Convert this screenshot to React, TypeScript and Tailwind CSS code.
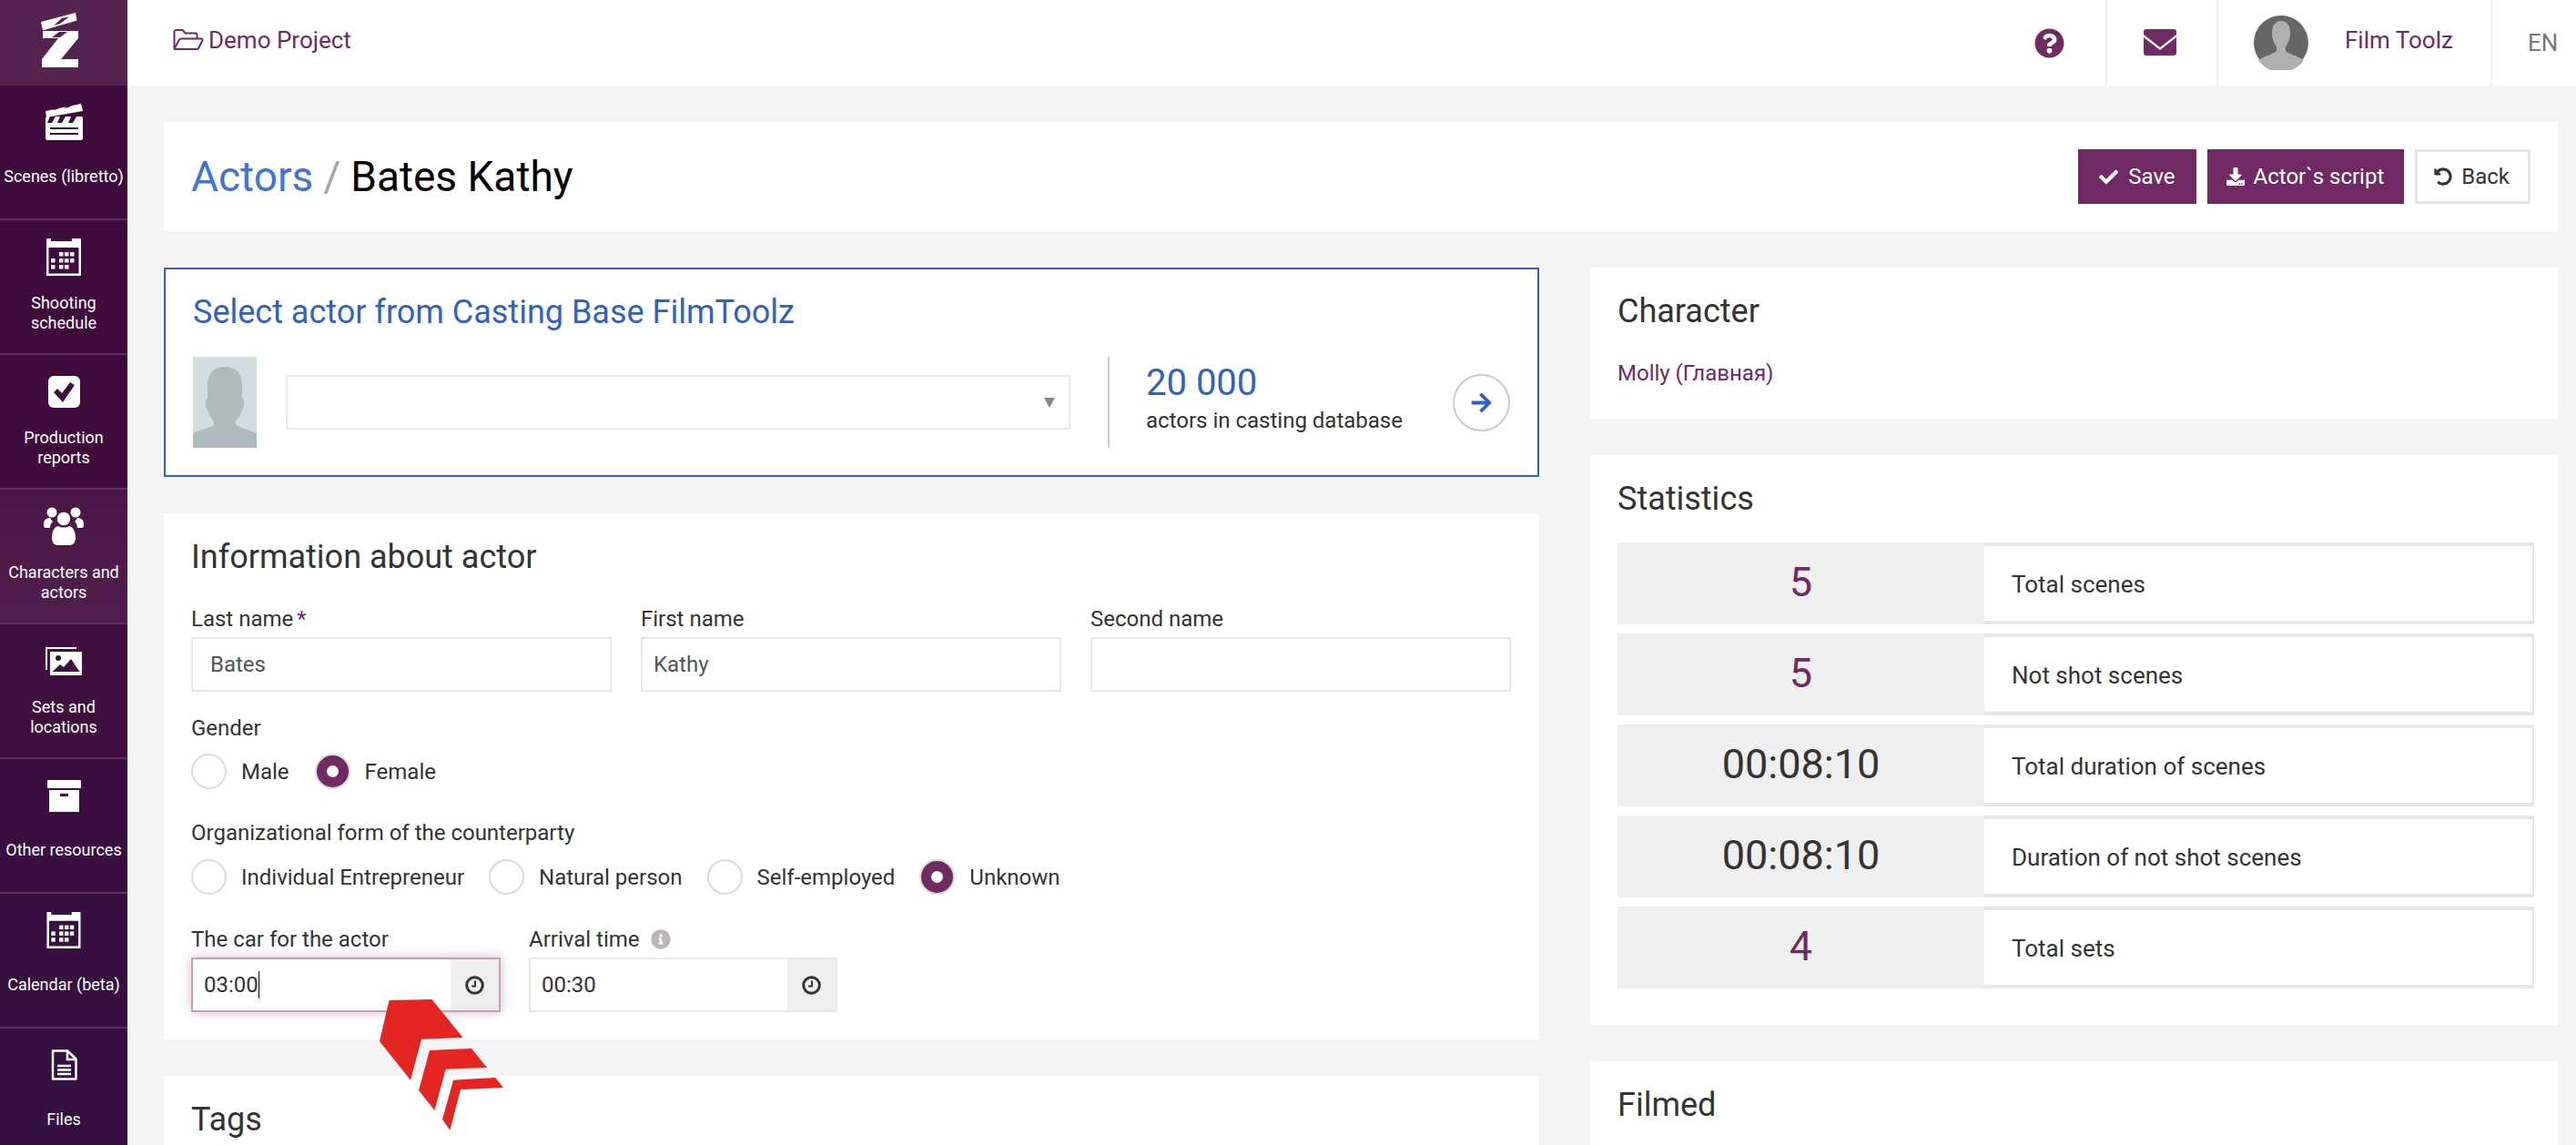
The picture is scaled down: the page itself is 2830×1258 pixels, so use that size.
import React from 'react';
import {
  FaArrowRight,
  FaCheck,
  FaDownload,
  FaInfoCircle,
  FaQuestionCircle,
  FaUndoAlt,
} from 'react-icons/fa';

const Logo = () => (
  <svg width="48" height="66" viewBox="42 10 48 66" fill="#fff" className="mr-[8px] mb-[8px]">
    <polygon points="45,24 83,14 84.500,22.500 47,33.500" />
    <polygon points="59,28 68,20 76,18.500 66,26" fill="#55234f" />
    <polygon points="47,34 86,34 86,42 67,65 86,65 86,74 46,74 46,65 64,42 47,42" />
    <polygon points="57,41 65,35 74,35 66,41" fill="#55234f" />
  </svg>
);

const ClapperIcon = () => (
  <svg width="41" height="40" viewBox="0 0 41 40" fill="#fff">
    <polygon points="0,8 39,0 41,8 1,15" />
    <polygon points="8,7 14,3 19,2 13,6 " fill="#3f0a3c" />
    <polygon points="20,5 26,1.500 31,1 25,4" fill="#3f0a3c" />
    <rect x="0" y="14" width="41" height="26" rx="2" />
    <polygon points="5,14 11,14 7,21 2,21" fill="#3f0a3c" />
    <polygon points="16,14 22,14 18,21 13,21" fill="#3f0a3c" />
    <polygon points="28,14 34,14 30,21 25,21" fill="#3f0a3c" />
    <rect x="5" y="26" width="31" height="2" fill="#3f0a3c" />
    <rect x="5" y="32" width="31" height="2" fill="#3f0a3c" />
  </svg>
);

const CalendarIcon = ({ height = 41 }: { height?: number }) => (
  <svg width="38" height={height} viewBox="0 0 38 41" fill="#fff">
    <path d="M0 0h5v3h23V0h5v0h5v41H0zM2.500 10v28.500h33V10z" fillRule="evenodd" />
    {[
      [14, 15], [20, 15], [26, 15],
      [5, 22], [14, 22], [20, 22], [26, 22],
      [5, 29], [14, 29], [20, 29],
    ].map(([x, y]) => (
      <rect key={`${x}-${y}`} x={x} y={y} width="4.500" height="4.500" />
    ))}
  </svg>
);

const CheckIcon = () => (
  <svg width="35" height="35" viewBox="0 0 35 35">
    <rect width="35" height="35" rx="6" fill="#fff" />
    <path d="M6 18l4-4 5 5 9-12 5 3-13 19z" fill="#3f0a3c" />
  </svg>
);

const UsersIcon = () => (
  <svg width="44" height="42" viewBox="0 0 44 42" fill="#fff">
    <circle cx="9" cy="6" r="5.500" />
    <circle cx="35" cy="6" r="5.500" />
    <path d="M0 19c0-5 3-7 7-7 1 2 2 3 3 4-2 2-3 4-3 7H2c-1 0-2-1-2-4zM44 19c0-5-3-7-7-7-1 2-2 3-3 4 2 2 3 4 3 7h5c1 0 2-1 2-4z" />
    <circle cx="22" cy="13" r="8" stroke="#4a1646" strokeWidth="1.500" />
    <path d="M9 34c0-8 3-12 7-13 3 2 9 2 12 0 4 1 7 5 7 13 0 5-3 8-6 8H15c-3 0-6-3-6-8z" />
  </svg>
);

const ImagesIcon = () => (
  <svg width="40" height="31" viewBox="0 0 40 31" fill="#fff">
    <path d="M0 0h34v2H2v23H0z" />
    <path d="M5 5h35v26H5zM7.500 27h30L28 13l-8 9-4-3z" fillRule="evenodd" />
    <circle cx="14" cy="12" r="3" fill="#3f0f40" />
  </svg>
);

const ArchiveIcon = () => (
  <svg width="37" height="35" viewBox="0 0 37 35" fill="#fff">
    <rect width="37" height="9" rx="1" />
    <path d="M2 11h33v24H2zM14 15v3h9v-3z" fillRule="evenodd" />
  </svg>
);

const FileIcon = () => (
  <svg width="29" height="35" viewBox="0 0 29 35" fill="none" stroke="#fff" strokeWidth="2.500">
    <path d="M2 1.500h16l9.500 9v22H2z" strokeLinejoin="round" />
    <path d="M18 2v9h9M7 18h15M7 22.500h15M7 27h15" />
  </svg>
);

const FolderIcon = () => (
  <svg width="34" height="24" viewBox="0 0 34 24" fill="none" stroke="currentColor" strokeWidth="2" strokeLinejoin="round">
    <path d="M1.500 21V3a2 2 0 0 1 2-2h7l3 3.500h11a2 2 0 0 1 2 2V10" />
    <path d="M1.500 21.500L7 11.500a2 2 0 0 1 1.800-1H31a1.500 1.500 0 0 1 1.300 2.200L28 21a2 2 0 0 1-1.800 1H3a1.500 1.500 0 0 1-1.500-.500z" />
  </svg>
);

const ClockIcon = () => (
  <svg width="21" height="21" viewBox="0 0 21 21" fill="none" stroke="currentColor">
    <circle cx="10.500" cy="10.500" r="8.800" strokeWidth="3" />
    <path d="M11 5.500v6H7" strokeWidth="2" />
  </svg>
);

const navItems = [
  { label: 'Scenes (libretto)', icon: <ClapperIcon />, bg: 'bg-[#3f0a3c]', single: true },
  { label: 'Shooting schedule', icon: <CalendarIcon />, bg: 'bg-[#3f0a3c]', narrow: true },
  { label: 'Production reports', icon: <CheckIcon />, bg: 'bg-[#3f0b3d]', narrow: true },
  { label: 'Characters and actors', icon: <UsersIcon />, bg: 'bg-gradient-to-b from-[#4a1646] to-[#511f4d]' },
  { label: 'Sets and locations', icon: <ImagesIcon />, bg: 'bg-[#3f0f40]', narrow: true },
  { label: 'Other resources', icon: <ArchiveIcon />, bg: 'bg-[#3a0f3f]', single: true },
  { label: 'Calendar (beta)', icon: <CalendarIcon height={40} />, bg: 'bg-[#36103f]', single: true },
  { label: 'Files', icon: <FileIcon />, bg: 'bg-[#33103f]', single: true },
];

const stats = [
  { value: '5', label: 'Total scenes', accent: true },
  { value: '5', label: 'Not shot scenes', accent: true },
  { value: '00:08:10', label: 'Total duration of scenes' },
  { value: '00:08:10', label: 'Duration of not shot scenes' },
  { value: '4', label: 'Total sets', accent: true },
];

const Field = ({
  label,
  value,
  required,
  tight,
}: {
  label: string;
  value?: string;
  required?: boolean;
  tight?: boolean;
}) => (
  <div className="w-[462px]">
    <div className="h-[28px] mb-[6px] text-[24px] leading-[28px] text-[#333]">
      {label}
      {required && <span className="ml-[4px] text-[#702963]">*</span>}
    </div>
    <input
      readOnly
      value={value ?? ''}
      className={`w-full h-[60px] border-2 border-[#e6e6ee] bg-white text-[24px] text-[#555] outline-none ${
        tight ? 'px-[12px]' : 'px-[19px]'
      }`}
    />
  </div>
);

const Radio = ({ label, checked }: { label: string; checked?: boolean }) => (
  <div className="flex items-center h-[39px]">
    {checked ? (
      <span className="flex items-center justify-center w-[39px] h-[39px] rounded-full bg-[#702963] border-2 border-[#dcdcdc]">
        <span className="w-[13px] h-[13px] rounded-full bg-white" />
      </span>
    ) : (
      <span className="w-[39px] h-[39px] rounded-full border-2 border-[#dcdcdc] bg-white" />
    )}
    <span className="ml-[16px] text-[24px] text-[#333]">{label}</span>
  </div>
);

const Addon = () => (
  <div className="flex items-center justify-center w-[53px] h-full bg-[#eeeeee] text-[#333]">
    <ClockIcon />
  </div>
);

const Card = ({ className = '', children }: { className?: string; children: React.ReactNode }) => (
  <div className={`bg-white ${className}`}>{children}</div>
);

const Heading = ({ children }: { children: React.ReactNode }) => (
  <h2 className="h-[42px] text-[36px] leading-[42px] text-[#333]">{children}</h2>
);

export default function App() {
  return (
    <div className="relative flex h-[1258px] overflow-hidden bg-[#f4f4f4] font-[Roboto,sans-serif]">
      {/* Sidebar */}
      <aside className="flex flex-col shrink-0 w-[140px] h-full text-white">
        <div className="flex items-center justify-center shrink-0 h-[94px] bg-[#55234f]">
          <Logo />
        </div>
        {navItems.map((item) => (
          <div
            key={item.label}
            className={`flex flex-col items-center shrink-0 h-[148px] pt-[19px] border-b-2 border-[#5c325c] ${item.bg}`}
          >
            <div className="flex items-center justify-center h-[42px]">{item.icon}</div>
            <div
              className={`flex items-center justify-center h-[44px] text-center text-[18px] leading-[22px] ${
                item.single ? 'mt-[17px]' : 'mt-[19px]'
              }`}
            >
              <span className={item.narrow ? 'w-[100px]' : ''}>{item.label}</span>
            </div>
          </div>
        ))}
      </aside>

      <div className="flex flex-col flex-1 min-w-0">
        {/* Top bar */}
        <header className="flex items-center shrink-0 h-[94px] bg-white pl-[50px] text-[#702963]">
          <div className="flex items-center mb-[6px]">
            <FolderIcon />
            <span className="ml-[5px] text-[26px]">Demo Project</span>
          </div>
          <div className="flex items-center justify-center ml-auto w-[124px] h-full">
            <FaQuestionCircle size={33} />
          </div>
          <div className="flex items-center justify-center w-[122px] h-full pr-[5px] pb-[2px] border-l-2 border-[#eeeeee]">
            <svg width="36" height="29" viewBox="0 0 36 29">
              <path d="M3 0h30a3 3 0 0 1 3 3v3L18 20 0 6V3a3 3 0 0 1 3-3z" fill="#702963" />
              <path d="M0 9l18 14L36 9v17a3 3 0 0 1-3 3H3a3 3 0 0 1-3-3z" fill="#702963" />
            </svg>
          </div>
          <div className="flex items-center w-[301px] h-full pl-[39px] border-l-2 border-[#eeeeee]">
            <svg width="60" height="60" viewBox="0 0 60 60" className="shrink-0">
              <circle cx="30" cy="30" r="30" fill="#666666" />
              <path d="M30 6c7 0 10 6 10 13 0 6-2 12-5 15v5c3 3 14 6 20 10a30 30 0 0 1-50 0c6-4 17-7 20-10v-5c-3-3-5-9-5-15 0-7 3-13 10-13z" fill="#b0b0b0" />
            </svg>
            <span className="ml-[40px] mb-[6px] text-[26px]">Film Toolz</span>
          </div>
          <div className="flex items-center w-[94px] h-full pl-[39px] border-l-2 border-[#eeeeee] text-[26px] text-[#777]">
            EN
          </div>
        </header>

        <main className="flex-1 min-h-0 pt-[40px] pl-[40px] pr-[20px]">
          {/* Title */}
          <Card className="flex items-center justify-between h-[120px] px-[30px]">
            <h1 className="text-[46px] leading-none text-black">
              <span className="text-[#3d74d6]">Actors</span>
              <span className="mx-[11px] text-[#a3a3a3]">/</span>
              Bates Kathy
            </h1>
            <div className="flex gap-[12px]">
              <button className="flex items-center gap-[11px] h-[60px] px-[23px] bg-[#702963] text-[24px] text-white">
                <FaCheck size={21} />
                Save
              </button>
              <button className="flex items-center gap-[10px] h-[60px] pl-[21px] pr-[22px] bg-[#702963] text-[24px] text-white">
                <FaDownload size={20} />
                Actor`s script
              </button>
              <button className="flex items-center gap-[10px] h-[60px] pl-[18px] pr-[20px] border-[3px] border-[#e4e4e4] bg-white text-[24px] text-[#333]">
                <FaUndoAlt size={20} />
                Back
              </button>
            </div>
          </Card>

          <div className="flex gap-[56px] mt-[40px]">
            {/* Left column */}
            <div className="flex flex-col gap-[40px] w-[1511px] shrink-0">
              <div className="h-[230px] pt-[27px] pl-[30px] border-2 border-[#2f62bd] bg-white">
                <h2 className="h-[40px] text-[36px] leading-[40px] text-[#2f62bd]">
                  Select actor from Casting Base FilmToolz
                </h2>
                <div className="flex items-center h-[100px] mt-[29px]">
                  <svg width="70" height="100" viewBox="0 0 70 100" className="shrink-0">
                    <rect width="70" height="100" fill="#d3dde0" />
                    <path d="M35 11c10 0 19 4 19 22v13c3 1 3 9-1 14-1 5-3 8-6 11v4c6 4 16 5 23 9v16H0V84c7-4 17-5 23-9v-4c-3-3-5-6-6-11-4-5-4-13-1-14V33c0-18 9-22 19-22z" fill="#b0bbbf" />
                  </svg>
                  <div className="relative shrink-0 w-[862px] h-[60px] ml-[32px] border-2 border-[#e8e8ee]">
                    <span className="absolute right-[15px] top-[23px] border-x-[6px] border-t-[11px] border-x-transparent border-t-[#888]" />
                  </div>
                  <div className="shrink-0 w-[2px] h-[100px] ml-[41px] bg-[#c8ccd0]" />
                  <div className="shrink-0 w-[337px] h-full ml-[40px] pt-[9px]">
                    <div className="h-[40px] text-[40px] leading-[40px] text-[#2f62bd]">20 000</div>
                    <div className="h-[30px] mt-[6px] text-[24px] leading-[30px] text-[#333]">actors in casting database</div>
                  </div>
                  <div className="flex items-center justify-center shrink-0 w-[63px] h-[63px] rounded-full border-2 border-[#c8ccd0] text-[#2f62bd]">
                    <FaArrowRight size={25} />
                  </div>
                </div>
              </div>

              <Card className="h-[578px] pt-[27px] px-[30px]">
                <Heading>Information about actor</Heading>
                <div className="flex gap-[32px] mt-[33px]">
                  <Field label="Last name" value="Bates" required />
                  <Field label="First name" value="Kathy" tight />
                  <Field label="Second name" />
                </div>
                <div className="h-[28px] mt-[26px] text-[24px] leading-[28px] text-[#333]">Gender</div>
                <div className="flex gap-[28px] mt-[14px]">
                  <Radio label="Male" />
                  <Radio label="Female" checked />
                </div>
                <div className="h-[28px] mt-[34px] text-[24px] leading-[28px] text-[#333]">
                  Organizational form of the counterparty
                </div>
                <div className="flex gap-[27px] mt-[15px]">
                  <Radio label="Individual Entrepreneur" />
                  <Radio label="Natural person" />
                  <Radio label="Self-employed" />
                  <Radio label="Unknown" checked />
                </div>
                <div className="flex gap-[31px] mt-[35px]">
                  <div className="w-[340px]">
                    <div className="h-[28px] mb-[6px] text-[24px] leading-[28px] text-[#333]">The car for the actor</div>
                    <div className="flex items-stretch h-[60px] border-[2px] border-[#c99cb2] bg-white shadow-[0_0_12px_rgba(112,41,99,0.3)]">
                      <div className="flex flex-1 items-center pl-[12px] text-[24px] text-[#333]">
                        03:00
                        <span className="w-[1px] h-[30px] bg-black" />
                      </div>
                      <Addon />
                    </div>
                  </div>
                  <div className="w-[339px]">
                    <div className="flex items-center h-[28px] mb-[6px] text-[24px] leading-[28px] text-[#333]">
                      Arrival time
                      <FaInfoCircle size={22} className="ml-[12px] text-[#bbb5ba]" />
                    </div>
                    <div className="flex items-stretch h-[60px] border-2 border-[#e6e6ee] bg-white">
                      <div className="flex flex-1 items-center pl-[12px] text-[24px] text-[#333]">00:30</div>
                      <Addon />
                    </div>
                  </div>
                </div>
              </Card>

              <Card className="h-[200px] pt-[27px] px-[30px]">
                <Heading>Tags</Heading>
              </Card>
            </div>

            {/* Right column */}
            <div className="flex flex-col gap-[40px] flex-1 min-w-0">
              <Card className="h-[166px] pt-[27px] px-[30px]">
                <Heading>Character</Heading>
                <div className="h-[28px] mt-[33px] text-[24px] leading-[28px] text-[#702963]">Molly (Главная)</div>
              </Card>

              <Card className="h-[626px] pt-[27px] pl-[30px] pr-[26px]">
                <Heading>Statistics</Heading>
                <div className="flex flex-col gap-[10px] mt-[27px]">
                  {stats.map((stat) => (
                    <div key={stat.label} className="flex h-[90px]">
                      <div
                        className={`flex items-center justify-center shrink-0 w-[403px] pb-[2px] bg-[#efefef] text-[45px] ${
                          stat.accent ? 'text-[#702963]' : 'text-[#333]'
                        }`}
                      >
                        {stat.value}
                      </div>
                      <div className="flex flex-1 items-center pl-[30px] pt-[2px] border-y-4 border-r-2 border-[#e6e6e6] text-[26px] text-[#333]">
                        {stat.label}
                      </div>
                    </div>
                  ))}
                </div>
              </Card>

              <Card className="h-[200px] pt-[27px] px-[30px]">
                <Heading>Filmed</Heading>
              </Card>
            </div>
          </div>
        </main>
      </div>

      {/* Red pointer drawn on top of the screenshot */}
      <svg
        width="150"
        height="150"
        viewBox="410 1095 150 150"
        fill="#e52521"
        className="absolute left-[410px] top-[1095px]"
      >
        <polygon points="427.500,1099 474.500,1098 508.500,1140 463,1141.700 451,1186.700 417,1144" />
        <polygon points="472,1154 518,1152 535,1173 489.600,1174.700 477.400,1220 460,1198" />
        <polygon points="498,1186.700 544.300,1184 553,1195 506,1197 494.400,1241.700 486,1230" />
      </svg>
    </div>
  );
}
